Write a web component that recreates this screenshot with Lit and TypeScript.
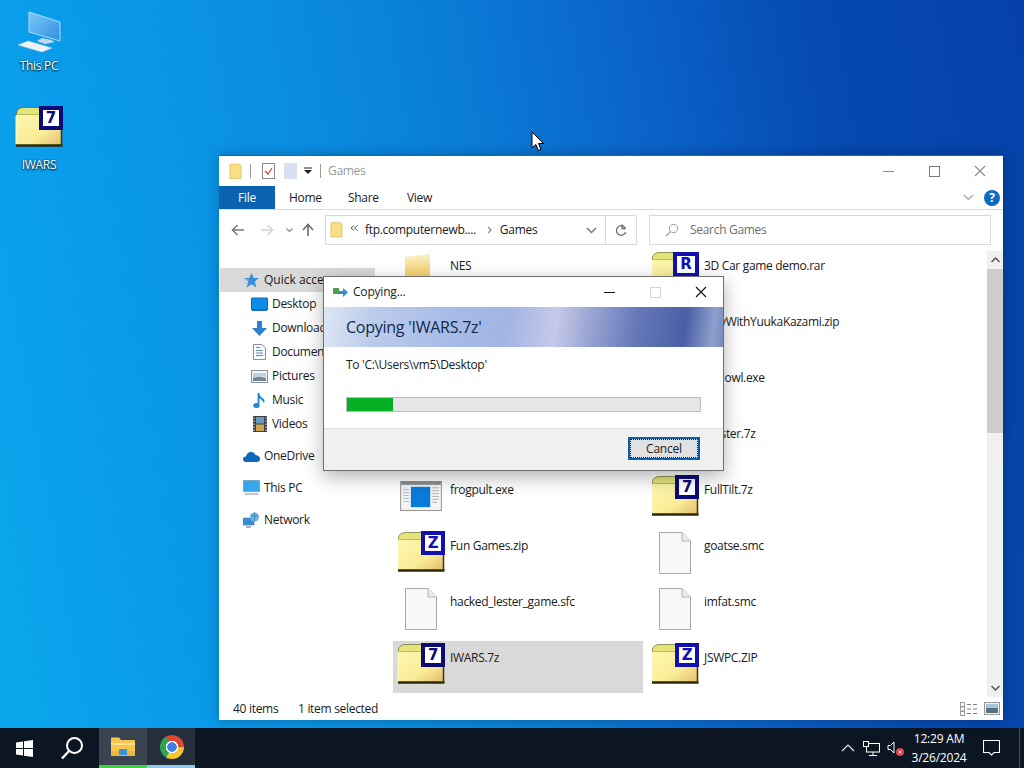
import { LitElement, html, css } from 'lit';
import { customElement } from 'lit/decorators.js';

// one entry per cell of the file list, left column then right column
type FileKind = 'folder' | 'seven' | 'zip' | 'rar' | 'page' | 'exe' | 'none';
interface FileItem { name: string; kind: FileKind; selected?: boolean; }

const FILES: FileItem[] = [
  { name: 'NES', kind: 'folder' },
  { name: '3D Car game demo.rar', kind: 'rar' },
  { name: '', kind: 'none' },
  { name: 'PlayWithYuukaKazami.zip', kind: 'zip' },
  { name: '', kind: 'none' },
  { name: 'Redowl.exe', kind: 'exe' },
  { name: '', kind: 'none' },
  { name: 'Blaster.7z', kind: 'seven' },
  { name: 'frogpult.exe', kind: 'exe' },
  { name: 'FullTilt.7z', kind: 'seven' },
  { name: 'Fun Games.zip', kind: 'zip' },
  { name: 'goatse.smc', kind: 'page' },
  { name: 'hacked_lester_game.sfc', kind: 'page' },
  { name: 'imfat.smc', kind: 'page' },
  { name: 'IWARS.7z', kind: 'seven', selected: true },
  { name: 'JSWPC.ZIP', kind: 'zip' },
];

const COPY_PROGRESS = 13;
const COPY_TARGET = "To 'C:\\Users\\vm5\\Desktop'";

// archive icon: yellow folder with a letter badge on its corner
const archive = (letter: string, cls: string) => html`
  <div class="archive">
    <svg width="48" height="42" viewBox="0 0 48 42">
      <path d="M1.500 12V7Q2 2 8 1.500H25L30 9H3z" fill="#e3e47a" stroke="#55560f" stroke-width=".6"/>
      <path d="M1 9H46V40H1z" fill="url(#fg${cls})"/>
      <defs><linearGradient id="fg${cls}" x1="0" y1="0" x2="1" y2="1">
        <stop offset="0" stop-color="#fdf7ac"/><stop offset=".6" stop-color="#f9ec98"/><stop offset="1" stop-color="#e2bb6c"/>
      </linearGradient></defs>
      <path d="M1 39.500H47.500" stroke="#2c2a06" stroke-width="2.500"/>
      <path d="M46.500 24V40" stroke="#3a3608" stroke-width="1.500"/>
      <path d="M1 10V38" stroke="#fffbd0" stroke-width="1"/>
    </svg>
    <span class="badge ${cls}">${letter}</span>
  </div>`;

const pageIcon = html`
  <svg width="34" height="44" viewBox="0 0 34 44">
    <path d="M1.500 1.500H24L32.500 10V42.500H1.500z" fill="#f7f8f8" stroke="#a9a9a9"/>
    <path d="M24 1.500V10H32.500" fill="#ececec" stroke="#b5b5b5"/>
  </svg>`;

const exeIcon = html`
  <svg width="43" height="31" viewBox="0 0 44 32">
    <rect x=".5" y=".5" width="42" height="30" fill="#f3f4f6" stroke="#8e8e8e"/>
    <rect x="1" y="1" width="41" height="3" fill="#8d8d8d"/>
    <rect x="11" y="6" width="20" height="21" fill="#0a7bd8"/>
    <path d="M3 9H9M3 12H9M3 15H9M3 18H9M3 21H9M33 7H40M33 10H40M33 13H40M33 16H40M33 19H40M33 22H38" stroke="#b5b5b5"/>
  </svg>`;

const folderIcon = html`
  <svg width="48" height="42" viewBox="0 0 48 42">
    <defs><linearGradient id="nesf" x1="0" y1="0" x2="0" y2="1">
      <stop offset="0" stop-color="#fbf0c8"/><stop offset=".45" stop-color="#f5d77e"/><stop offset="1" stop-color="#eec453"/>
    </linearGradient></defs>
    <path d="M8 8L33 5V40H14L8 34z" fill="url(#nesf)"/>
  </svg>`;

const smallFolder = (w: number, h: number) => html`
  <svg width=${w} height=${h} viewBox="0 0 14 17">
    <path d="M1 2Q1 .5 2.500 .5H10L13 2V16H1z" fill="#fbdf84" stroke="#d8b455" stroke-width=".7"/>
  </svg>`;

const chevronDown = (color: string) => html`
  <svg width="11" height="7" viewBox="0 0 11 7"><path d="M1 1L5.500 5.500L10 1" fill="none" stroke=${color} stroke-width="1.500"/></svg>`;

const NAV_ICONS: Record<string, unknown> = {
  quick: html`<svg width="17" height="17" viewBox="0 0 17 17"><path d="M8.500 1L10.700 6H16L11.800 9.500L13.400 15.500L8.500 12.200L3.600 15.500L5.200 9.500L1 6H6.300z" fill="#3a8fd8"/><path d="M3 8H6M2 11H5" stroke="#9cc8ec"/></svg>`,
  desktop: html`<svg width="17" height="15" viewBox="0 0 17 15"><rect x=".5" y="1" width="16" height="12" rx=".5" fill="#0e8de8" stroke="#0a68b8"/><rect x="1" y="12" width="15" height="2" fill="#1a6bb0"/></svg>`,
  down: html`<svg width="17" height="17" viewBox="0 0 17 17"><path d="M6 1H11V8H16L8.500 16L1 8H6z" fill="#2f7fd0"/></svg>`,
  docs: html`<svg width="13" height="16" viewBox="0 0 13 16"><path d="M.5.5H9L12.500 4V15.500H.5z" fill="#f6f8fa" stroke="#8a929a"/><path d="M3 3.500H7M3 6.500H10M3 9H10M3 11.500H10" stroke="#6e87a2"/></svg>`,
  pics: html`<svg width="17" height="13" viewBox="0 0 17 13"><rect x=".5" y=".5" width="16" height="12" fill="#f2f4f6" stroke="#8c949c"/><path d="M2 3H15V7L9 6L2 8z" fill="#bcd2e4"/><path d="M2 8L9 6.500L15 8V11H2z" fill="#6f8696"/></svg>`,
  music: html`<svg width="13" height="17" viewBox="0 0 13 17"><path d="M5.500 1V12" stroke="#1f86dc" stroke-width="1.800"/><ellipse cx="3.500" cy="13.500" rx="3.200" ry="2.500" fill="#1f86dc"/><path d="M6 1Q7 5 11 7Q12 9 11 11Q10 8 6 6z" fill="#1f86dc"/></svg>`,
  videos: html`<svg width="14" height="16" viewBox="0 0 14 16"><rect width="14" height="16" fill="#3b3f46"/><rect x="3" y="1" width="8" height="6.500" fill="#6b96c6"/><rect x="3" y="8.500" width="8" height="6.500" fill="#c9a648"/><path d="M1 1.500V15M13 1.500V15" stroke="#e8e8e8" stroke-dasharray="1.500 1.500"/></svg>`,
  cloud: html`<svg width="17" height="11" viewBox="0 0 17 11"><path d="M3 11Q0 10.500 0 8Q0 5.500 3 5.500Q4 1 8 1Q11.500 1 12.500 4Q17 4.500 17 8Q17 10.500 14 11z" fill="#0f68b8"/></svg>`,
  pc: html`<svg width="17" height="16" viewBox="0 0 17 16"><rect x=".5" y=".5" width="16" height="11" fill="#35a7ea" stroke="#7aa6c6"/><path d="M2 13H15L16 15H1z" fill="#b9c8d2"/></svg>`,
  net: html`<svg width="17" height="16" viewBox="0 0 17 16"><rect x="0" y="6" width="11" height="7" fill="#2f8fd8" stroke="#5f7f96" stroke-width=".6"/><path d="M3 15H8" stroke="#8a9aa6" stroke-width="1.500"/><circle cx="11.500" cy="5" r="4.500" fill="#6db3e2"/><path d="M8 3Q11 6 15 3M11.500 .5V9.500" stroke="#2f7fb8" stroke-width=".7" fill="none"/></svg>`,
};

@customElement('file-cell')
export class FileCell extends LitElement {
  static properties = { item: { type: Object } };
  declare item: FileItem;

  static styles = css`
    :host { display: block; }
    .cell { display: flex; height: 52px; box-sizing: border-box; }
    .cell.selected { background: #d9d9d9; }
    .ico { width: 57px; flex: none; display: flex; align-items: center; justify-content: flex-start; }
    .ico > svg, .ico > .archive { margin-left: 4px; }
    .ico > .page { margin-left: 11px; }
    .ico > .exe { margin-left: 7px; margin-top: -1px; }
    .ico > .folder { margin-left: 4px; margin-top: -7px; }
    .name { padding-top: 9px; font: 12px/16px "Open Sans", sans-serif; letter-spacing: -0.32px; color: #1a1a1a; white-space: nowrap; }
    .archive { position: relative; width: 48px; height: 42px; margin-top: -6px; }
    .archive svg { display: block; }
    .badge {
      position: absolute; right: 0; top: 0; width: 24px; height: 24px; box-sizing: border-box;
      border: 4px solid #0b0b78; background: #fff; color: #0b0b78;
      font: bold 15px/16px "DejaVu Sans", sans-serif; text-align: center; overflow: hidden;
    }
    .badge.zip, .badge.rar { border-color: #1010b4; color: #1010b4; }
    .badge.rar { width: 26px; height: 25px; top: 1px; right: 0; line-height: 17px; }
  `;

  private icon() {
    switch (this.item.kind) {
      case 'folder': return html`<span class="folder">${folderIcon}</span>`;
      case 'seven': return archive('7', 'seven');
      case 'zip': return archive('Z', 'zip');
      case 'rar': return archive('R', 'rar');
      case 'page': return html`<span class="page">${pageIcon}</span>`;
      case 'exe': return html`<span class="exe">${exeIcon}</span>`;
      default: return null;
    }
  }

  render() {
    return html`
      <div class="cell ${this.item.selected ? 'selected' : ''}">
        <div class="ico">${this.icon()}</div>
        <div class="name">${this.item.name}</div>
      </div>`;
  }
}

@customElement('copy-dialog')
export class CopyDialog extends LitElement {
  static styles = css`
    :host { display: flex; flex-direction: column; font: 12px/16px "Open Sans", sans-serif; color: #1a1a1a; background: #fff; }
    .title { height: 30px; flex: none; display: flex; align-items: center; padding-left: 9px; letter-spacing: -0.2px; }
    .title svg.app { margin-right: 5px; }
    .title span { flex: 1; }
    .ctl { width: 46px; display: flex; justify-content: center; }
    .ctl:last-child { margin-right: -1px; }
    .banner {
      height: 40px; flex: none; display: flex; align-items: center; padding-left: 22px;
      font-size: 16px; color: #12294a; letter-spacing: -0.25px;
      background: linear-gradient(98deg, #dfe7f6 0, #bccceb 12%, #a6bbe6 32%, #a2b5e3 46%, #c6c9e8 58%, #9aa7d4 66%, #6577b8 78%, #4a5fa6 90%, #8fa0cc 97%, #7589bb 100%);
    }
    .body { height: 81px; flex: none; box-sizing: border-box; padding: 10px 22px 0 22px; letter-spacing: -0.3px; }
    .bar { margin-top: 24px; height: 15px; box-sizing: border-box; border: 1px solid #bcbcbc; background: #e6e6e6; }
    .fill { height: 100%; background: #06b025; }
    .foot { flex: 1; display: flex; justify-content: flex-end; align-items: flex-start; padding: 8px 23px 0 0; background: #f0f0f0; border-top: 1px solid #dfdfdf; }
    button {
      width: 72px; height: 23px; padding: 0; box-sizing: border-box; border: 2px solid #0a5fb0; background: #e1e1e1;
      font: 12px "Open Sans", sans-serif; letter-spacing: -0.2px; color: #1a1a1a;
      outline: 1px dotted #111; outline-offset: -3px;
    }
  `;

  render() {
    return html`
      <div class="title">
        <svg class="app" width="15" height="11" viewBox="0 0 15 11"><rect y="1" width="6" height="6" fill="#4fa04f"/><path d="M6 4H10V1L15 5.500L10 10V7H6z" fill="#2d8fd8"/></svg>
        <span>Copying...</span>
        <div class="ctl"><svg width="11" height="3"><path d="M0 1.500H11" stroke="#111"/></svg></div>
        <div class="ctl"><svg width="11" height="11"><rect x=".5" y=".5" width="10" height="10" fill="none" stroke="#d4d4d4"/></svg></div>
        <div class="ctl"><svg width="12" height="12"><path d="M1 1L11 11M11 1L1 11" stroke="#111" stroke-width="1.100"/></svg></div>
      </div>
      <div class="banner">Copying 'IWARS.7z'</div>
      <div class="body">
        <div>${COPY_TARGET}</div>
        <div class="bar"><div class="fill" style="width:${COPY_PROGRESS}%"></div></div>
      </div>
      <div class="foot"><button>Cancel</button></div>`;
  }
}

@customElement('explorer-window')
export class ExplorerWindow extends LitElement {
  static styles = css`
    :host { display: flex; flex-direction: column; background: #fff; box-sizing: border-box; border-top: 1px solid #1a6aa8; font: 12px/16px "Open Sans", sans-serif; letter-spacing: -0.3px; color: #1a1a1a; box-shadow: 0 0 12px rgba(0,0,0,.25); }
    .title { height: 30px; flex: none; display: flex; align-items: center; padding-left: 10px; }
    .title .sep { width: 1px; height: 14px; background: #9a9a9a; margin: 0 11px 0 8px; }
    .title .name { color: #9a9a9a; flex: 1; }
    .ctl { width: 46px; display: flex; justify-content: center; }
    .tabs { height: 23px; flex: none; display: flex; align-items: center; border-bottom: 1px solid #dadada; box-sizing: content-box; }
    .file { width: 56px; align-self: stretch; background: #0a62b0; color: #fff; display: flex; align-items: center; justify-content: center; }
    .tab { margin-left: 14px; width: 45px; }
    .tabs .grow { flex: 1; }
    .help { width: 16px; height: 16px; border-radius: 50%; background: #0a6cc4; color: #fff; font: bold 12px/16px "Open Sans", sans-serif; text-align: center; margin: 0 3px 0 10px; }
    .addr { height: 41px; flex: none; box-sizing: border-box; padding: 0 0 1px 12px; display: flex; align-items: center; }
    .navs { display: flex; align-items: center; width: 94px; flex: none; }
    .navs svg:nth-child(1) { margin-right: 15px; }
    .navs svg:nth-child(2) { margin-right: 12px; }
    .navs svg:nth-child(3) { margin-right: 9px; }
    .box { height: 30px; box-sizing: border-box; border: 1px solid #d9d9d9; display: flex; align-items: center; }
    .path { width: 312px; padding-left: 4px; }
    .path .crumb { margin-left: 7px; white-space: nowrap; }
    .path .crumb.last { margin-left: 8px; }
    .path .sep { margin-left: 11px; }
    .path .grow { flex: 1; }
    .path .ref { width: 30px; align-self: stretch; border-left: 1px solid #d9d9d9; display: flex; align-items: center; justify-content: center; margin-left: 8px; }
    .search { width: 342px; margin-left: 12px; padding-left: 15px; color: #6d6d6d; }
    .search svg { margin-right: 11px; }
    .main { flex: 1; display: flex; min-height: 0; overflow: hidden; }
    .nav { width: 161px; flex: none; padding-top: 17px; box-sizing: border-box; }
    .row { height: 24px; display: flex; align-items: center; white-space: nowrap; overflow: hidden; box-sizing: border-box; }
    .row .ni { width: 17px; display: flex; justify-content: center; margin-right: 4px; }
    .row.sub { padding-left: 32px; }
    .row.top { padding-left: 24px; }
    .row.hl { background: #d9d9d9; width: 155px; margin-left: 1px; padding-left: 23px; letter-spacing: 0; }
    .row.group { margin-top: 8px; }
    .list { flex: 1; padding: 0 0 0 13px; margin-top: -2px; display: grid; grid-template-columns: 250px 250px; gap: 4px; align-content: start; }
    .scroll { width: 16px; flex: none; background: #f0f0f0; display: flex; flex-direction: column; align-items: center; }
    .scroll .arrow { height: 18px; flex: none; display: flex; align-items: center; justify-content: center; }
    .scroll .thumb { width: 100%; height: 164px; background: #cdcdcd; flex: none; }
    .scroll .rest { flex: 1; }
    .status { height: 23px; flex: none; display: flex; align-items: center; padding: 0 3px 0 14px; }
    .status .count { width: 65px; }
    .status .grow { flex: 1; }
    .status svg { margin-left: 6px; }
  `;

  private navRow(icon: string, label: string, cls: string) {
    return html`<div class="row ${cls}"><span class="ni">${NAV_ICONS[icon]}</span>${label}</div>`;
  }

  render() {
    return html`
      <div class="title">
        ${smallFolder(13, 17)}
        <span class="sep"></span>
        <svg width="13" height="16" viewBox="0 0 13 16"><rect x=".5" y=".5" width="12" height="15" fill="#fff" stroke="#8a8a8a"/><path d="M3 8L6 11L10 5" fill="none" stroke="#c9433a" stroke-width="1.200"/></svg>
        <svg style="margin-left:9px" width="13" height="16" viewBox="0 0 13 16"><rect width="13" height="16" fill="#d6e0f0"/></svg>
        <svg style="margin-left:7px" width="8" height="8" viewBox="0 0 8 8"><path d="M0 1H8" stroke="#222"/><path d="M0 3L4 7L8 3z" fill="#222"/></svg>
        <span class="sep" style="margin:0 7px 0 8px"></span>
        <span class="name">Games</span>
        <div class="ctl"><svg width="11" height="3"><path d="M0 1.500H11" stroke="#8a8a8a"/></svg></div>
        <div class="ctl"><svg width="11" height="11"><rect x=".5" y=".5" width="10" height="10" fill="none" stroke="#7a7a7a"/></svg></div>
        <div class="ctl"><svg width="12" height="12"><path d="M1 1L11 11M11 1L1 11" stroke="#8a8a8a" stroke-width="1.100"/></svg></div>
      </div>
      <div class="tabs">
        <div class="file">File</div>
        <div class="tab">Home</div><div class="tab">Share</div><div class="tab">View</div>
        <div class="grow"></div>
        ${chevronDown('#b0b0b0')}
        <div class="help">?</div>
      </div>
      <div class="addr">
        <div class="navs">
          <svg width="14" height="12" viewBox="0 0 14 12"><path d="M13 6H2M6.500 1L1.500 6L6.500 11" fill="none" stroke="#7a7a7a" stroke-width="1.600"/></svg>
          <svg width="14" height="12" viewBox="0 0 14 12"><path d="M1 6H12M7.500 1L12.500 6L7.500 11" fill="none" stroke="#d4d4d4" stroke-width="1.600"/></svg>
          <svg width="7" height="5" viewBox="0 0 7 5"><path d="M.5 .5L3.500 3.500L6.500 .5" fill="none" stroke="#8a8a8a" stroke-width="1.200"/></svg>
          <svg width="12" height="14" viewBox="0 0 12 14"><path d="M6 13V2M1 7L6 1.500L11 7" fill="none" stroke="#6d6d6d" stroke-width="1.600"/></svg>
        </div>
        <div class="box path">
          ${smallFolder(13, 16)}
          <svg style="margin-left:7px;margin-top:-4px" width="8" height="6" viewBox="0 0 8 6"><path d="M4 .5L1 3L4 5.500M7.500 .5L4.500 3L7.500 5.500" fill="none" stroke="#555"/></svg>
          <span class="crumb">ftp.computernewb....</span>
          <svg class="sep" width="5" height="8" viewBox="0 0 5 8"><path d="M1 1L4 4L1 7" fill="none" stroke="#8a8a8a" stroke-width="1.200"/></svg>
          <span class="crumb last">Games</span>
          <span class="grow"></span>
          ${chevronDown('#7a7a7a')}
          <span class="ref"><svg width="12" height="13" viewBox="0 0 12 13"><path d="M10 3.500A4.800 4.800 0 1 0 10.800 8" fill="none" stroke="#6d6d6d" stroke-width="1.300"/><path d="M7 .5V4.500H11" fill="none" stroke="#6d6d6d" stroke-width="1.300"/></svg></span>
        </div>
        <div class="box search">
          <svg width="14" height="14" viewBox="0 0 14 14"><circle cx="8.500" cy="5.500" r="4.200" fill="none" stroke="#a0a0a0"/><path d="M5.500 8.500L1 13" stroke="#a0a0a0" stroke-width="1.200"/></svg>
          Search Games
        </div>
      </div>
      <div class="main">
        <div class="nav">
          ${this.navRow('quick', 'Quick access', 'top hl')}
          ${this.navRow('desktop', 'Desktop', 'sub')}
          ${this.navRow('down', 'Downloads', 'sub')}
          ${this.navRow('docs', 'Documents', 'sub')}
          ${this.navRow('pics', 'Pictures', 'sub')}
          ${this.navRow('music', 'Music', 'sub')}
          ${this.navRow('videos', 'Videos', 'sub')}
          ${this.navRow('cloud', 'OneDrive', 'top group')}
          ${this.navRow('pc', 'This PC', 'top group')}
          ${this.navRow('net', 'Network', 'top group')}
        </div>
        <div class="list">
          ${FILES.map((f) => html`<file-cell .item=${f}></file-cell>`)}
        </div>
        <div class="scroll">
          <div class="arrow"><svg width="9" height="6" viewBox="0 0 9 6"><path d="M.5 5L4.500 1L8.500 5" fill="none" stroke="#505050" stroke-width="1.400"/></svg></div>
          <div class="thumb"></div>
          <div class="rest"></div>
          <div class="arrow"><svg width="9" height="6" viewBox="0 0 9 6"><path d="M.5 1L4.500 5L8.500 1" fill="none" stroke="#505050" stroke-width="1.400"/></svg></div>
        </div>
      </div>
      <div class="status">
        <span class="count">40 items</span><span>1 item selected</span>
        <span class="grow"></span>
        <svg width="18" height="14" viewBox="0 0 18 14"><rect x=".5" y=".5" width="4" height="4" fill="none" stroke="#9a9a9a"/><rect x=".5" y="5" width="4" height="4" fill="none" stroke="#9a9a9a"/><rect x=".5" y="9.500" width="4" height="4" fill="none" stroke="#9a9a9a"/><path d="M7 2.500H11M13 2.500H17M7 7H11M13 7H17M7 11.500H11M13 11.500H17" stroke="#7a7a7a"/></svg>
        <svg width="16" height="13" viewBox="0 0 16 13"><rect x=".5" y=".5" width="15" height="12" fill="#eef1f3" stroke="#9a9a9a"/><rect x="2" y="2" width="12" height="4" fill="#a9c3d8"/><rect x="2" y="6" width="12" height="5" fill="#56707f"/></svg>
      </div>`;
  }
}

@customElement('app-root')
export class AppRoot extends LitElement {
  static styles = css`
    :host { display: flex; flex-direction: column; width: 1024px; height: 768px; overflow: hidden; position: relative; font-family: "Open Sans", sans-serif; }
    .desk {
      flex: 1; position: relative; min-height: 0; box-sizing: border-box; padding-top: 7px;
      background: linear-gradient(80deg, #0aa8ec 0, #0a9ceb 14%, #0a8ee2 34%, #0a7cd6 50%, #0a62c8 66%, #0649b0 82%, #0541a8 100%);
    }
    .shortcut { width: 78px; height: 67px; margin-bottom: 32px; display: flex; flex-direction: column; align-items: center; }
    .shortcut .pic { height: 48px; width: 48px; }
    .shortcut .label { margin-top: 3px; font-size: 12px; line-height: 16px; letter-spacing: -0.3px; color: #fff; text-shadow: 0 1px 2px rgba(0,0,0,.85), 0 0 2px rgba(0,0,0,.6); }
    .archive { position: relative; width: 48px; height: 42px; }
    .archive svg { display: block; }
    .badge {
      position: absolute; right: 0; top: 0; width: 24px; height: 24px; box-sizing: border-box;
      border: 4px solid #0b0b78; background: #fff; color: #0b0b78;
      font: bold 15px/16px "DejaVu Sans", sans-serif; text-align: center; overflow: hidden;
    }
    explorer-window { position: absolute; left: 219px; top: 155px; width: 784px; height: 565px; }
    copy-dialog { position: absolute; left: 323px; top: 276px; width: 401px; height: 195px; box-sizing: border-box; border: 1px solid #6f6f6f; box-shadow: 0 6px 18px rgba(0,0,0,.3); }
    .cursor { position: absolute; left: 531px; top: 131px; }
    .bar { height: 40px; flex: none; display: flex; align-items: center; background: #0c1623; color: #fff; }
    .start { width: 48px; display: flex; justify-content: center; }
    .find { width: 48px; display: flex; justify-content: center; }
    .app { width: 48px; height: 40px; box-sizing: border-box; display: flex; align-items: center; justify-content: center; border-bottom: 3px solid transparent; }
    .app.on { background: #3a4450; border-bottom-color: #3fd23f; margin-left: 3px; }
    .app.run { background: #252f3b; border-bottom-color: #8fc8ee; padding-left: 1px; }
    .chrome {
      width: 24px; height: 24px; border-radius: 50%;
      background:
        radial-gradient(circle, #3f7fe6 0 4.500px, #fff 5px 6px, transparent 6.500px),
        conic-gradient(from -30deg, #dd4535 0 120deg, #f7c52c 120deg 240deg, #2fa34f 240deg 360deg);
    }
    .grow { flex: 1; }
    .tray { display: flex; align-items: center; }
    .clock { width: 68px; text-align: center; font-size: 12px; line-height: 19px; letter-spacing: -0.2px; }
    .note { width: 40px; margin: 0 8px 0 -2px; display: flex; justify-content: center; }
    .edge { width: 5px; height: 40px; border-left: 1px solid #4a525c; box-sizing: border-box; }
  `;

  render() {
    return html`
      <div class="desk">
        <div class="shortcut">
          <div class="pic">
            <svg width="48" height="48" viewBox="0 0 48 48">
              <defs><linearGradient id="scr" x1="0" y1="0" x2="1" y2="1"><stop offset="0" stop-color="#7cc8f8"/><stop offset="1" stop-color="#2f8fe0"/></linearGradient></defs>
              <path d="M14 5L45 15V34L14 25z" fill="url(#scr)" stroke="#a9dcfa"/>
              <path d="M27 31L36 33L40 35L30 37L22 34z" fill="#c5d9e6"/>
              <path d="M3 38L13 34L37 41L27 45z" fill="#edf2f5" stroke="#c2d0da" stroke-width=".5"/>
            </svg>
          </div>
          <div class="label">This PC</div>
        </div>
        <div class="shortcut">
          <div class="pic">${archive('7', 'home')}</div>
          <div class="label">IWARS</div>
        </div>
        <explorer-window></explorer-window>
        <copy-dialog></copy-dialog>
        <svg class="cursor" width="14" height="21" viewBox="0 0 14 21"><path d="M1 1V17L4.800 13.500L7.500 19.500L10 18.500L7.500 12.500H12.500z" fill="#fff" stroke="#000"/></svg>
      </div>
      <div class="bar">
        <div class="start"><svg width="17" height="17" viewBox="0 0 17 17"><path d="M0 2.500L7 1.500V8H0zM8 1.300L17 0V8H8zM0 9H7V15.500L0 14.500zM8 9H17V17L8 15.700z" fill="#fff"/></svg></div>
        <div class="find"><svg width="24" height="24" viewBox="0 0 24 24"><circle cx="14.500" cy="9.500" r="7.500" fill="none" stroke="#fff" stroke-width="2"/><path d="M9 15L2 22.500" stroke="#fff" stroke-width="2.400"/></svg></div>
        <div class="app on">
          <svg width="24" height="20" viewBox="0 0 24 20"><path d="M0 1.500Q0 .5 1 .5H8L10 3H23Q24 3 24 4V19H0z" fill="#f6c64e"/><path d="M0 6H24V8H0z" fill="#fbe08e"/><path d="M0 14H24V19H0z" fill="#e8b93e"/><rect x="8" y="12" width="8" height="6" fill="#3a93d6"/></svg>
        </div>
        <div class="app run"><div class="chrome"></div></div>
        <div class="grow"></div>
        <div class="tray">
          <svg width="14" height="8" viewBox="0 0 14 8" style="margin-right:8px"><path d="M1 7L7 1L13 7" fill="none" stroke="#e8e8e8" stroke-width="1.200"/></svg>
          <svg width="17" height="15" viewBox="0 0 17 15" style="margin-right:7px"><rect x="3.500" y="2.500" width="13" height="8.500" fill="none" stroke="#fff"/><path d="M10 11V14M6 14.500H14" stroke="#fff"/><rect x=".5" y=".5" width="5" height="5" fill="#0c1623" stroke="#fff"/></svg>
          <svg width="18" height="16" viewBox="0 0 18 16"><path d="M1 5.500H3.500L7 2V13L3.500 9.500H1z" fill="none" stroke="#fff"/><circle cx="13" cy="12" r="4" fill="#d9434e"/><path d="M11.500 10.500L14.500 13.500M14.500 10.500L11.500 13.500" stroke="#fff" stroke-width=".8"/></svg>
        </div>
        <div class="clock">12:29 AM<br />3/26/2024</div>
        <div class="note"><svg width="17" height="16" viewBox="0 0 17 16"><path d="M.5 .5H16.500V12.500H11L8.500 15L6 12.500H.5z" fill="none" stroke="#fff" stroke-width="1.100"/></svg></div>
        <div class="edge"></div>
      </div>`;
  }
}
